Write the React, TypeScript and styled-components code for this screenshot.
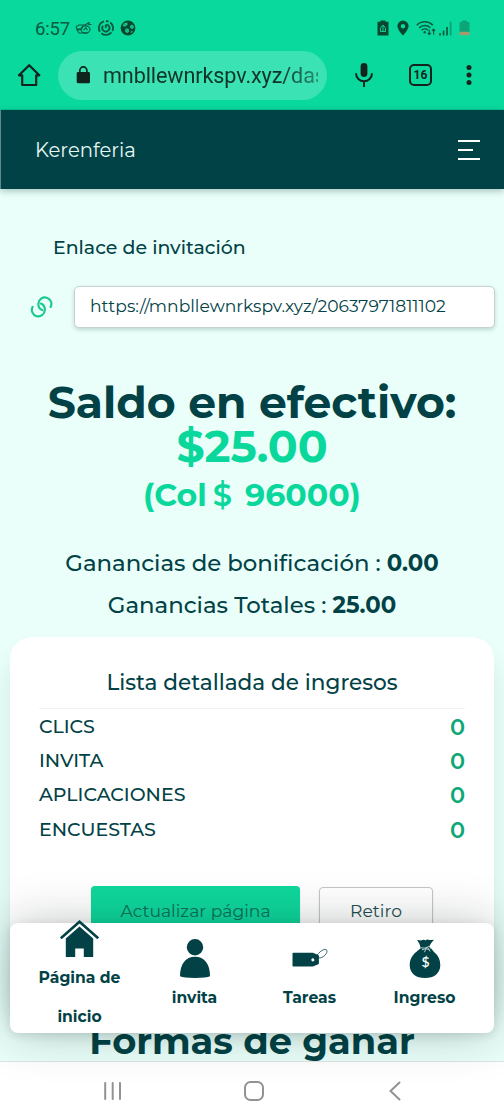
import React from 'react';
import styled, { createGlobalStyle } from 'styled-components';

const ink = '#024246';
const mint = '#0ad79c';
const statusInk = '#075b40';
const chromeInk = '#15231f';

const Global = createGlobalStyle`
  * { box-sizing: border-box; }
  body { margin: 0; background: #fff; font-family: Montserrat, Inter, sans-serif; color: ${ink}; }
  button, input { font: inherit; color: inherit; }
  svg { display: block; flex: none; }
`;

const Screen = styled.div`
  position: relative;
  width: 504px;
  height: 1120px;
  overflow: hidden;
  display: flex;
  flex-direction: column;
`;

const BrowserChrome = styled.header`
  flex: none;
  height: 110px;
  background: #0ad99d;
  border-bottom: 1px solid #09c890;
  font-family: Roboto, sans-serif;
`;

const StatusBar = styled.div`
  height: 50px;
  padding: 6px 34px 0 35px;
  display: flex;
  align-items: center;
  justify-content: space-between;
  color: ${statusInk};
`;

const StatusGroup = styled.div<{ $gap: number }>`
  display: flex;
  align-items: center;
  gap: ${(p) => p.$gap}px;
`;

const Clock = styled.span`
  font-size: 18.5px;
  line-height: 22px;
  margin: 2px -1px 0 0;
  letter-spacing: -0.2px;
`;

const AddressRow = styled.div`
  display: flex;
  align-items: center;
  height: 50px;
  padding-left: 17px;
`;

const AddressPill = styled.div`
  width: 269px;
  height: 49px;
  margin: 0 27px 0 17px;
  padding: 0 9px 0 18px;
  border-radius: 25px;
  background: #3be2b3;
  display: flex;
  align-items: center;
  gap: 12px;
`;

const Address = styled.span`
  flex: 1;
  overflow: hidden;
  white-space: nowrap;
  font-size: 21.6px;
  letter-spacing: -0.11px;
  line-height: 30px;
  padding-top: 1px;
  color: #10342a;
  -webkit-mask-image: linear-gradient(90deg, #000 82%, rgba(0, 0, 0, 0.45) 100%);
  mask-image: linear-gradient(90deg, #000 82%, rgba(0, 0, 0, 0.45) 100%);
`;

const TabCount = styled.div`
  width: 23px;
  height: 22px;
  margin: 0 34px 0 35px;
  border: 2.2px solid ${chromeInk};
  border-radius: 5px;
  display: flex;
  align-items: center;
  justify-content: center;
  font-size: 12px;
  font-weight: 700;
  line-height: 1;
  color: ${chromeInk};
`;

const SiteHeader = styled.div`
  flex: none;
  position: relative;
  height: 79px;
  padding: 0 24px 0 34px;
  border-left: 1px solid #5d8a8b;
  display: flex;
  align-items: center;
  justify-content: space-between;
  background: #014246;
  color: #e4f7f4;
  font-size: 19.6px;
  box-shadow: 0 2px 7px rgba(0, 50, 45, 0.3);
`;

const Burger = styled.div`
  display: flex;
  flex-direction: column;
  gap: 7px;
  width: 22px;
`;

const BurgerBar = styled.span<{ $short?: boolean }>`
  height: 2px;
  width: ${(p) => (p.$short ? 15 : 22)}px;
  background: #fff;
`;

const Page = styled.main`
  flex: 1;
  min-height: 0;
  overflow: hidden;
  background: #eafffa;
`;

const InviteLabel = styled.div`
  padding: 46px 0 0 53px;
  font-size: 18.95px;
  font-weight: 500;
  line-height: 25px;
`;

const InviteRow = styled.div`
  display: flex;
  align-items: center;
  gap: 21px;
  padding: 26px 9.5px 0 30px;
`;

const InviteField = styled.div`
  flex: 1;
  height: 42px;
  padding: 0 15px 3px;
  border: 1px solid #c5d2d1;
  border-radius: 5px;
  background: #fff;
  box-shadow: 0 2px 4px rgba(0, 40, 40, 0.18);
  display: flex;
  align-items: center;
  font-size: 17.15px;
  white-space: nowrap;
`;

const Balance = styled.section`
  margin-top: 52px;
  text-align: center;
  font-weight: 700;
`;

const BalanceLine = styled.div<{ $accent?: boolean }>`
  font-size: 44.1px;
  line-height: 44px;
  color: ${(p) => (p.$accent ? mint : ink)};
`;

const LocalBalance = styled.div`
  display: flex;
  justify-content: center;
  margin-top: 5px;
  font-size: 31.6px;
  line-height: 44px;
  color: ${mint};
`;

const CurrencySign = styled.span`
  font-weight: 600;
  font-size: 30.5px;
  margin: 0 13px 0 6px;
`;

const Totals = styled.section`
  margin-top: 25px;
  text-align: center;
  font-size: 22.8px;
  line-height: 42.3px;
  font-weight: 500;
`;

const IncomeCard = styled.section`
  margin: 10px 10px 0;
  height: 362px;
  padding: 24px 29px 0;
  border-radius: 22px;
  background: #fff;
  box-shadow: 0 22px 28px rgba(0, 80, 60, 0.12);
`;

const CardTitle = styled.h2`
  margin: 0 0 1px;
  height: 48px;
  border-bottom: 1px solid #f3f1f1;
  text-align: center;
  font-size: 21.6px;
  line-height: 42px;
  font-weight: 500;
`;

const IncomeRow = styled.div`
  display: flex;
  justify-content: space-between;
  font-size: 18.95px;
  font-weight: 500;
  line-height: 34.4px;
`;

const IncomeValue = styled.span`
  font-size: 22.4px;
  font-weight: 600;
  color: #0ea878;
`;

const Actions = styled.div`
  display: flex;
  align-items: flex-start;
  margin-top: 39px;
  padding-left: 52px;
  gap: 19px;
`;

const ActionButton = styled.button<{ $primary?: boolean }>`
  width: ${(p) => (p.$primary ? 209 : 114)}px;
  height: ${(p) => (p.$primary ? 48 : 46)}px;
  margin-top: ${(p) => (p.$primary ? 0 : 1)}px;
  padding: 0;
  border: ${(p) => (p.$primary ? 'none' : '1px solid #c4c8c8')};
  border-radius: 4px;
  background: ${(p) => (p.$primary ? '#0fd79c' : '#fff')};
  color: ${(p) => (p.$primary ? '#0b6f5b' : '#1f4d50')};
  box-shadow: 0 1px 2px rgba(0, 0, 0, 0.12);
  font-size: 17.2px;
  white-space: nowrap;
`;

const EarnHeading = styled.h2`
  margin: 20px 0 0;
  text-align: center;
  font-size: 36.8px;
  line-height: 44px;
  font-weight: 700;
`;

const TabBar = styled.nav`
  position: absolute;
  left: 10px;
  right: 10px;
  bottom: 87px;
  height: 110.5px;
  padding: 0 12px;
  border-radius: 8px;
  background: #fff;
  box-shadow: 0 0 48px rgba(0, 25, 20, 0.25), 0 2px 10px rgba(0, 30, 25, 0.1);
  display: flex;
`;

const TabItem = styled.div`
  flex: 1;
  display: flex;
  flex-direction: column;
  align-items: center;
  justify-content: center;
  text-align: center;
  font-size: 15.6px;
  line-height: 39px;
  font-weight: 700;
`;

const SystemBar = styled.footer`
  flex: none;
  height: 59px;
  border-top: 1px solid #dde5e3;
  background: #fff;
  display: flex;
  align-items: center;
  padding: 0 102px 0 103px;
`;

const SystemKey = styled.span<{ $before?: number }>`
  margin-left: ${(p) => p.$before ?? 0}px;
`;

const SatelliteIcon = () => (
  <svg width="17" height="14" viewBox="0 0 17 14" fill="none" stroke={statusInk} strokeWidth="1.1">
    <path d="M1 5.500 4 4h6l4-2.500M1 5.500l1 2.500h4M8 5 6.300 8.500 2 9l2 3h8" />
    <ellipse cx="10.500" cy="8.500" rx="4.500" ry="3.600" />
    <path d="M8.500 9 11 6.800l1.500 2.400M13 4l1.600-2.800M13.500 3.500h3" />
  </svg>
);

const SwirlIcon = () => (
  <svg width="16" height="16" viewBox="0 0 16 16" fill="none" stroke={statusInk} strokeWidth="1.8">
    <path d="M6 1.300A7 7 0 0 0 2 11.800M3.400 13.200A7 7 0 0 0 13.400 12.400M14.300 11A7 7 0 0 0 12.200 2.500M10.600 1.600 8 1" />
    <path d="M5 5.700A3.600 3.600 0 1 0 10.500 5.500Q9 4.300 8 5.200T8.300 8" />
  </svg>
);

const SoccerIcon = () => (
  <svg width="16" height="16" viewBox="0 0 16 16">
    <circle cx="8" cy="8" r="7.400" fill="#05482f" />
    <g fill="#19b987">
      <path d="m4 3.200 3.200-1 .5 2.500-2.500 2-2.600-.8z" />
      <path d="m10.300 5.300 2-.9 2 2.600-1.800 2.200-2.600-1.500z" />
      <path d="m5.800 8.200 2.800.5.8 2.600-2 2-2.600-1.700z" />
      <path d="m11.200 11.200 1.700-.6-.8 1.800-1.600.9z" />
    </g>
  </svg>
);

const BatterySaverIcon = () => (
  <svg width="12" height="16" viewBox="0 0 12 16">
    <path d="M3.500 1.800V.5h5v1.300H11.500V15.500H.5V1.800z" fill="#05482f" />
    <path d="M3.300 8.300 6 5l2.700 3.300M6 5.600V12M3.500 8.500v3h5v-3" fill="none" stroke="#14cf98" strokeWidth="1" />
  </svg>
);

const PinIcon = () => (
  <svg width="12" height="16" viewBox="0 0 12 16">
    <path fillRule="evenodd" fill="#05482f" d="M6 .5a5.600 5.600 0 0 0-5.600 5.600C.4 10 6 15.500 6 15.500s5.600-5.500 5.600-9.400A5.600 5.600 0 0 0 6 .5zm0 3.500a2.200 2.200 0 1 1 0 4.400 2.200 2.200 0 0 1 0-4.400z" />
  </svg>
);

const WifiIcon = () => (
  <svg width="20" height="16" viewBox="0 0 20 16" fill="none" stroke={statusInk} strokeWidth="1.500">
    <path d="M.8 5.200a11.200 11.200 0 0 1 16-.1M3.200 7.900a8 8 0 0 1 11.200-.1M5.600 10.300a4.600 4.600 0 0 1 6.400-.2" />
    <circle cx="8.700" cy="12.300" r="1.200" fill={statusInk} stroke="none" />
    <path d="M13.300 9.700v4.800m-1.600-1.600 1.600 1.700 1.600-1.700M17.600 14.500V9.300M16 10.900l1.600-1.700 1.600 1.700" strokeWidth="1.200" />
  </svg>
);

const SignalIcon = () => (
  <svg width="13" height="15" viewBox="0 0 13 15">
    <path d="M.2 12h1.700v2.500H.2zM3.700 9.500h1.700v5H3.700zM7.200 6h1.700v8.500H7.200z" fill={statusInk} />
    <path d="M10.800.8h1.700v13.700h-1.700z" fill="#0ba073" />
  </svg>
);

const LowBatteryIcon = () => (
  <svg width="11" height="16" viewBox="0 0 11 16">
    <path d="M3 2V.5h5V2h2.500v10H.5V2z" fill="#0ca577" />
    <path d="M.5 11.700h10v2.500l-1 1h-8l-1-1z" fill="#a59a6c" />
  </svg>
);

const HouseOutline = () => (
  <svg width="24" height="24" viewBox="0 0 24 24" fill="none" stroke={chromeInk} strokeWidth="2.200" strokeLinejoin="round" strokeLinecap="round">
    <path d="M2 12.300 12.200 2.200 22.300 12.300H19.200V22H5.200V12.300z" />
  </svg>
);

const LockIcon = () => (
  <svg width="15" height="18" viewBox="0 0 15 18">
    <rect x=".7" y="6" width="13.300" height="11.300" rx="1.400" fill="#10241e" />
    <path d="M3.800 6.500V4.500a3.550 3.550 0 0 1 7.100 0v2" fill="none" stroke="#10241e" strokeWidth="1.700" />
  </svg>
);

const MicIcon = () => (
  <svg width="20" height="26" viewBox="0 0 20 26">
    <rect x="6.600" y="1" width="6.800" height="14" rx="3.400" fill={chromeInk} />
    <path d="M2 11.300a8 8 0 0 0 16 0M10 19.500V25" fill="none" stroke={chromeInk} strokeWidth="2" />
  </svg>
);

const DotsIcon = () => (
  <svg width="6" height="22" viewBox="0 0 6 22" fill={chromeInk}>
    <circle cx="3" cy="3.500" r="2.500" />
    <circle cx="3" cy="11" r="2.500" />
    <circle cx="3" cy="18.500" r="2.500" />
  </svg>
);

const ChainIcon = () => (
  <svg width="23" height="24" viewBox="30 295 23 24" fill="none" stroke="#17c98f" strokeWidth="2.100" strokeLinecap="round">
    <path d="M50.600 307A6.500 6.500 0 1 0 38.400 303.500Q38 308.500 42.400 310.200" />
    <path d="M32.600 306.800A6.500 6.500 0 1 0 44.800 310.300Q45.200 305.300 40.800 303.600" />
  </svg>
);

const HomeIcon = () => (
  <svg width="40" height="39" viewBox="0.5 0 40 39" fill={ink}>
    <path d="M20 7.500 33.700 19.500V38H24.300V29.500H15.700V38H6.300V19.500z" />
    <path d="M1.300 19.300 20 2.700 38.700 19.300" fill="none" stroke={ink} strokeWidth="2.600" />
  </svg>
);

const PersonIcon = () => (
  <svg width="32" height="39" viewBox="0 0 32 39" fill={ink}>
    <circle cx="16" cy="8.200" r="8.200" />
    <path d="M1 37.300C1 25 6.500 17.700 16 17.700S31 25 31 37.300Q27.500 39 16 39T1 37.300z" />
  </svg>
);

const TagIcon = () => (
  <svg width="36" height="39" viewBox="0 0 36 39">
    <path fillRule="evenodd" fill={ink} d="M1.300 13.700h19.500l5.500 2.300q.6.300.6 1v7.400q0 .6-.6.900L20.800 27.500H1.300q-.8 0-.8-.8V14.500q0-.8.8-.8zM20.900 19.200a1.600 1.600 0 1 0 0 3.200 1.600 1.600 0 0 0 0-3.200z" />
    <path d="M22.500 20.500C25 14.500 31 9.500 34 10.600c3 1.300-1 7.200-5.500 8.200-2 .4-3.500-.3-5 .9" fill="none" stroke={ink} strokeWidth=".8" />
  </svg>
);

const BagIcon = () => (
  <svg width="32" height="39" viewBox="0 0 32 39">
    <path fill={ink} d="M8 1q3 .4 4 .6Q15 0 16.500 1.500 18 0 20.500 1q2 0 4.500-.2-3.500 3.500-5 7Q23 10 25 13q6.300 5 6.300 13c0 8.500-6.300 13-15.300 13S.7 34.500.7 26C.7 18 6 13.500 11.500 9.500 11.500 6.500 10 3.500 8 1z" />
    <path d="M11.500 8.800q4 1.200 8.500-1.300M13 10.800q4-2 7.500-.3M17.500 8.500l-2 4.700M18.500 8.500l2.600 4M20.500 7.500l1.800 2.500" fill="none" stroke="#c6d8d7" strokeWidth=".9" />
    <text x="16.500" y="28" textAnchor="middle" fill="#fff" fontSize="14" fontWeight="600" fontFamily="Lato, sans-serif">$</text>
  </svg>
);

const RecentsIcon = () => (
  <svg width="20" height="20" viewBox="0 0 20 20" stroke="#929292" strokeWidth="2" strokeLinecap="round">
    <path d="M2.200 2v16M9.700 2v16M17 2v16" />
  </svg>
);

const HomeKeyIcon = () => (
  <svg width="22" height="22" viewBox="0 0 22 22" fill="none" stroke="#929292" strokeWidth="2">
    <rect x="2" y="2" width="18" height="18" rx="5.500" />
  </svg>
);

const BackIcon = () => (
  <svg width="14" height="20" viewBox="0 0 14 20" fill="none" stroke="#929292" strokeWidth="2" strokeLinecap="round">
    <path d="M11.500 1.500 2.500 10l9 8.500" />
  </svg>
);

const incomes = [
  ['CLICS', 0],
  ['INVITA', 0],
  ['APLICACIONES', 0],
  ['ENCUESTAS', 0],
] as const;

const tabs = [
  { label: 'Página de inicio', icon: <HomeIcon /> },
  { label: 'invita', icon: <PersonIcon /> },
  { label: 'Tareas', icon: <TagIcon /> },
  { label: 'Ingreso', icon: <BagIcon /> },
];

export default function App() {
  return (
    <Screen>
      <Global />
      <BrowserChrome>
        <StatusBar>
          <StatusGroup $gap={6}>
            <Clock>6:57</Clock>
            <SatelliteIcon />
            <SwirlIcon />
            <SoccerIcon />
          </StatusGroup>
          <StatusGroup $gap={7}>
            <StatusGroup $gap={8}>
              <BatterySaverIcon />
              <PinIcon />
            </StatusGroup>
            <StatusGroup $gap={3}>
              <WifiIcon />
              <SignalIcon />
            </StatusGroup>
            <LowBatteryIcon />
          </StatusGroup>
        </StatusBar>
        <AddressRow>
          <HouseOutline />
          <AddressPill>
            <LockIcon />
            <Address>mnbllewnrkspv.xyz/das</Address>
          </AddressPill>
          <MicIcon />
          <TabCount>16</TabCount>
          <DotsIcon />
        </AddressRow>
      </BrowserChrome>

      <SiteHeader>
        Kerenferia
        <Burger>
          <BurgerBar />
          <BurgerBar $short />
          <BurgerBar />
        </Burger>
      </SiteHeader>

      <Page>
        <InviteLabel>Enlace de invitación</InviteLabel>
        <InviteRow>
          <ChainIcon />
          <InviteField>https://mnbllewnrkspv.xyz/20637971811102</InviteField>
        </InviteRow>

        <Balance>
          <BalanceLine>Saldo en efectivo:</BalanceLine>
          <BalanceLine $accent>$25.00</BalanceLine>
          <LocalBalance>
            (Col<CurrencySign>$</CurrencySign>96000)
          </LocalBalance>
        </Balance>

        <Totals>
          <div>Ganancias de bonificación : <b>0.00</b></div>
          <div>Ganancias Totales : <b>25.00</b></div>
        </Totals>

        <IncomeCard>
          <CardTitle>Lista detallada de ingresos</CardTitle>
          {incomes.map(([name, value]) => (
            <IncomeRow key={name}>
              {name}
              <IncomeValue>{value}</IncomeValue>
            </IncomeRow>
          ))}
          <Actions>
            <ActionButton $primary>Actualizar página</ActionButton>
            <ActionButton>Retiro</ActionButton>
          </Actions>
        </IncomeCard>

        <EarnHeading>Formas de ganar</EarnHeading>
      </Page>

      <TabBar>
        {tabs.map((tab) => (
          <TabItem key={tab.label}>
            {tab.icon}
            {tab.label}
          </TabItem>
        ))}
      </TabBar>

      <SystemBar>
        <SystemKey><RecentsIcon /></SystemKey>
        <SystemKey $before={120}><HomeKeyIcon /></SystemKey>
        <SystemKey $before={123}><BackIcon /></SystemKey>
      </SystemBar>
    </Screen>
  );
}
